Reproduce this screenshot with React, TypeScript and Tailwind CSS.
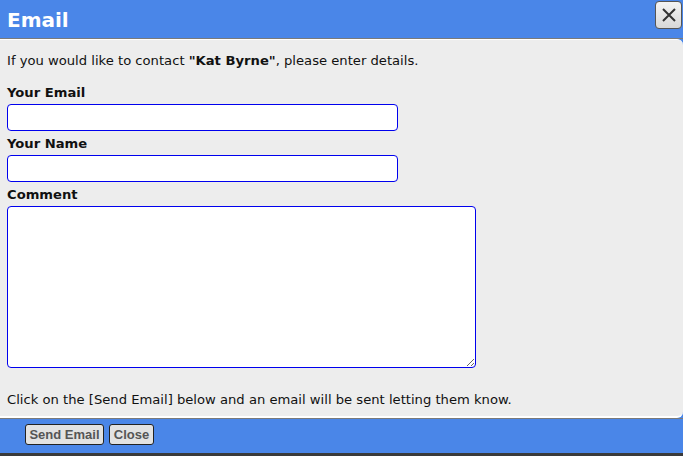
import React from "react";

export default function App() {
  const v = { fontFamily: '"DejaVu Sans", Verdana, sans-serif' };
  return (
    <div className="w-[683px] h-[456px] overflow-hidden flex flex-col bg-[#4a86e8]" style={v}>
      <div className="h-[39px] flex items-start justify-between bg-[#4a86e8] border-b border-[#7a7a7a]">
        <div className="pl-[7px] pt-[8px] text-[20px] leading-[24px] font-bold text-white">Email</div>
        <button className="mt-[1px] mr-[1px] w-[27px] h-[28px] rounded-[4px] border border-[#555] bg-gradient-to-b from-[#f4f4f4] to-[#d8d8d8] flex items-center justify-center">
          <svg width="16" height="16" viewBox="0 0 16 16">
            <path d="M2 2L14 14M14 2L2 14" stroke="#333" strokeWidth="2" />
          </svg>
        </button>
      </div>
      <div className="h-[379px] bg-[#ededed] border-t border-white rounded-tr-[6px] rounded-br-[6px] border-b-2 border-b-white px-[7px] text-[13.15px] text-[#111]">
        <div className="pt-[13px] leading-[16px]">
          If you would like to contact <b>"Kat Byrne"</b>, please enter details.
        </div>
        <div className="mt-[16px] font-bold leading-[16px]">Your Email</div>
        <input className="mt-[3px] block w-[391px] h-[27px] bg-white border border-[#0000ee] rounded-[4px] outline-none" />
        <div className="mt-[5px] font-bold leading-[16px]">Your Name</div>
        <input className="mt-[3px] block w-[391px] h-[27px] bg-white border border-[#0000ee] rounded-[4px] outline-none" />
        <div className="mt-[5px] font-bold leading-[16px]">Comment</div>
        <textarea className="mt-[3px] block w-[469px] h-[162px] bg-white border border-[#0000ee] rounded-[4px] outline-none" />
        <div className="mt-[24px] leading-[16px]">
          Click on the [Send Email] below and an email will be sent letting them know.
        </div>
      </div>
      <div className="h-[1px] bg-[#7a7a7a]" />
      <div className="h-[34px] bg-[#4a86e8] flex items-start pt-[5px] gap-[5px] pl-[25px]" style={{ fontFamily: '"Liberation Sans", Arial, sans-serif' }}>
        <button className="w-[79px] h-[21px] rounded-[3px] border border-[#222] bg-[#e2e2e2] text-[13px] font-bold text-[#555] leading-[19px] text-center">Send Email</button>
        <button className="w-[45px] h-[21px] rounded-[3px] border border-[#222] bg-[#e2e2e2] text-[13px] font-bold text-[#555] leading-[19px] text-center">Close</button>
      </div>
      <div className="flex-1 bg-[#3a3a3a]" />
    </div>
  );
}
